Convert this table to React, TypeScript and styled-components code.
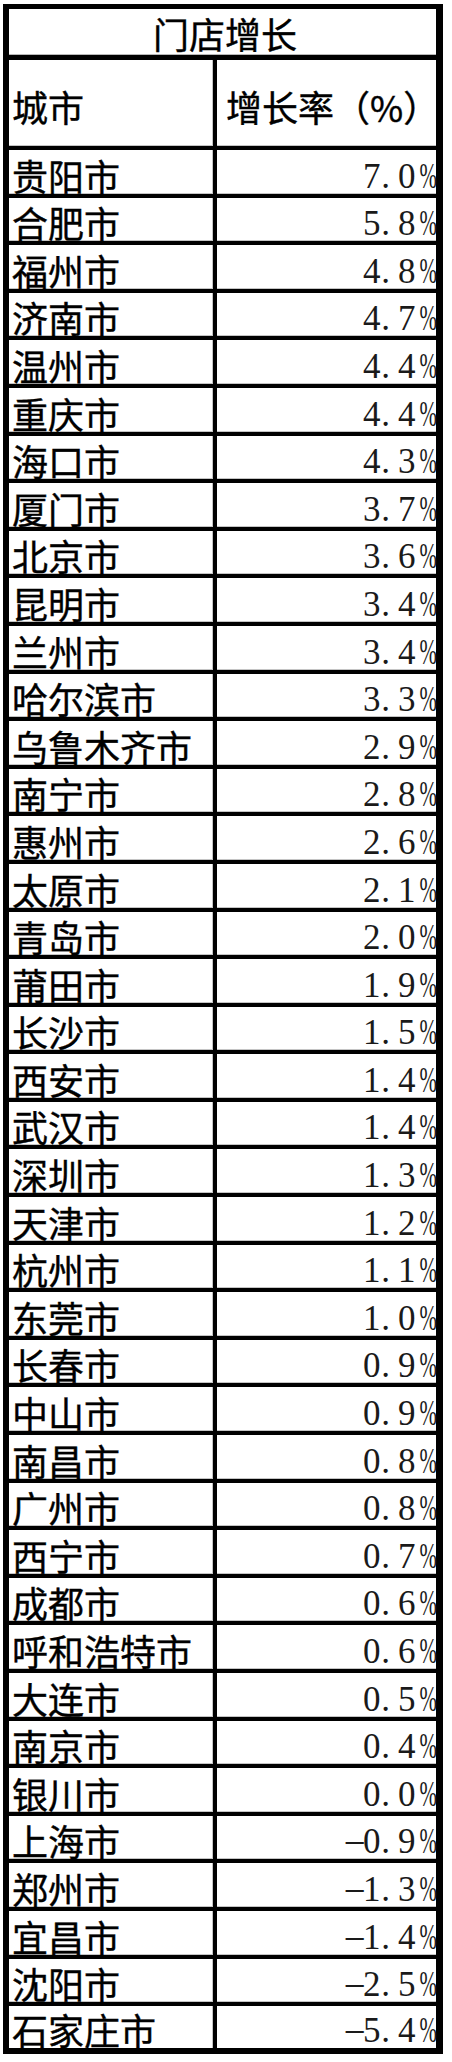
import React from 'react'
import styled, { createGlobalStyle } from 'styled-components'

const GlobalStyle = createGlobalStyle`
  html, body {
    margin: 0;
    padding: 0;
    background: #fff;
  }
`

const cjk = `"Noto Sans CJK SC", "Noto Sans", sans-serif`
const num = `"Liberation Serif", "Noto Sans CJK SC", serif`

const Sheet = styled.div`
  box-sizing: border-box;
  width: 440px;
  margin: 4px 0 0 3px;
  border-style: solid;
  border-color: #000;
  border-width: 5px 7px 6px 6px;
  background: #fff;
  color: #000;
  font-family: ${cjk};
`

const TitleRow = styled.div`
  box-sizing: border-box;
  height: 51px;
  border-bottom: 5px solid #000;
  box-shadow: inset 0 -1px 0 #b8b8b8;
  display: flex;
  align-items: center;
  justify-content: center;
  padding: 1px 0 0 5px;
  font-size: 36px;
  line-height: 1;
  -webkit-text-stroke: 0.4px #000;
`

const Row = styled.div<{ $height: number; $last?: boolean }>`
  box-sizing: border-box;
  height: ${(p) => p.$height}px;
  display: grid;
  grid-template-columns: 208px 219px;
  border-bottom: ${(p) => (p.$last ? 'none' : '4px solid #000')};
  box-shadow: ${(p) => (p.$last ? 'none' : 'inset 0 -1px 0 #c4c4c4')};
`

const NameCell = styled.div<{ $head?: boolean }>`
  box-sizing: border-box;
  display: flex;
  align-items: ${(p) => (p.$head ? 'center' : 'flex-end')};
  padding: ${(p) => (p.$head ? '5px 0 0 3px' : '0 0 1px 3px')};
  border-right: 4px solid #000;
  box-shadow: inset -1px 0 0 #c4c4c4;
  font-size: 36px;
  line-height: 1;
  white-space: nowrap;
  -webkit-text-stroke: 0.4px #000;
`

const HeadValue = styled.div`
  display: flex;
  align-items: center;
  padding: 5px 0 0 9px;
  font-size: 36px;
  line-height: 1;
  white-space: nowrap;
  -webkit-text-stroke: 0.4px #000;
`

const ValueCell = styled.div`
  display: flex;
  justify-content: flex-end;
  align-items: flex-end;
  padding-right: 3px;
  font-family: ${num};
  font-size: 35px;
  line-height: 1;
`

// SimSun-style half-width cells: every character takes the same width
const Glyph = styled.span<{ $kind: 'digit' | 'dot' | 'pct' | 'minus' }>`
  display: inline-block;
  width: 0.5em;
  text-align: ${(p) => (p.$kind === 'dot' ? 'left' : 'center')};
  padding-left: ${(p) => (p.$kind === 'dot' ? '0.02em' : '0')};
  box-sizing: border-box;
  transform: ${(p) =>
    p.$kind === 'pct'
      ? 'scaleX(0.6)'
      : p.$kind === 'minus'
        ? 'scale(2, 0.8) translateY(-0.06em)'
        : 'none'};
  transform-origin: center;
  white-space: pre;
`

const Percent = styled.span`
  display: inline-flex;
  color: #1a1a1a;
`

const rows: [string, string][] = [
  ['贵阳市', '7.0%'],
  ['合肥市', '5.8%'],
  ['福州市', '4.8%'],
  ['济南市', '4.7%'],
  ['温州市', '4.4%'],
  ['重庆市', '4.4%'],
  ['海口市', '4.3%'],
  ['厦门市', '3.7%'],
  ['北京市', '3.6%'],
  ['昆明市', '3.4%'],
  ['兰州市', '3.4%'],
  ['哈尔滨市', '3.3%'],
  ['乌鲁木齐市', '2.9%'],
  ['南宁市', '2.8%'],
  ['惠州市', '2.6%'],
  ['太原市', '2.1%'],
  ['青岛市', '2.0%'],
  ['莆田市', '1.9%'],
  ['长沙市', '1.5%'],
  ['西安市', '1.4%'],
  ['武汉市', '1.4%'],
  ['深圳市', '1.3%'],
  ['天津市', '1.2%'],
  ['杭州市', '1.1%'],
  ['东莞市', '1.0%'],
  ['长春市', '0.9%'],
  ['中山市', '0.9%'],
  ['南昌市', '0.8%'],
  ['广州市', '0.8%'],
  ['西宁市', '0.7%'],
  ['成都市', '0.6%'],
  ['呼和浩特市', '0.6%'],
  ['大连市', '0.5%'],
  ['南京市', '0.4%'],
  ['银川市', '0.0%'],
  ['上海市', '-0.9%'],
  ['郑州市', '-1.3%'],
  ['宜昌市', '-1.4%'],
  ['沈阳市', '-2.5%'],
  ['石家庄市', '-5.4%'],
]

function kindOf(ch: string) {
  if (ch === '.') return 'dot' as const
  if (ch === '%') return 'pct' as const
  if (ch === '-') return 'minus' as const
  return 'digit' as const
}

function Rate({ value }: { value: string }) {
  return (
    <Percent>
      {value.split('').map((ch, i) => (
        <Glyph key={i} $kind={kindOf(ch)}>
          {ch}
        </Glyph>
      ))}
    </Percent>
  )
}

function App() {
  return (
    <>
      <GlobalStyle />
      <Sheet>
        <TitleRow>门店增长</TitleRow>
        <Row $height={90}>
          <NameCell $head>城市</NameCell>
          <HeadValue>增长率（%）</HeadValue>
        </Row>
        {rows.map(([city, rate], i) => {
          const last = i === rows.length - 1
          return (
            <Row key={city} $height={last ? 41.6 : 47.6} $last={last}>
              <NameCell>{city}</NameCell>
              <ValueCell>
                <Rate value={rate} />
              </ValueCell>
            </Row>
          )
        })}
      </Sheet>
    </>
  )
}

export default App
